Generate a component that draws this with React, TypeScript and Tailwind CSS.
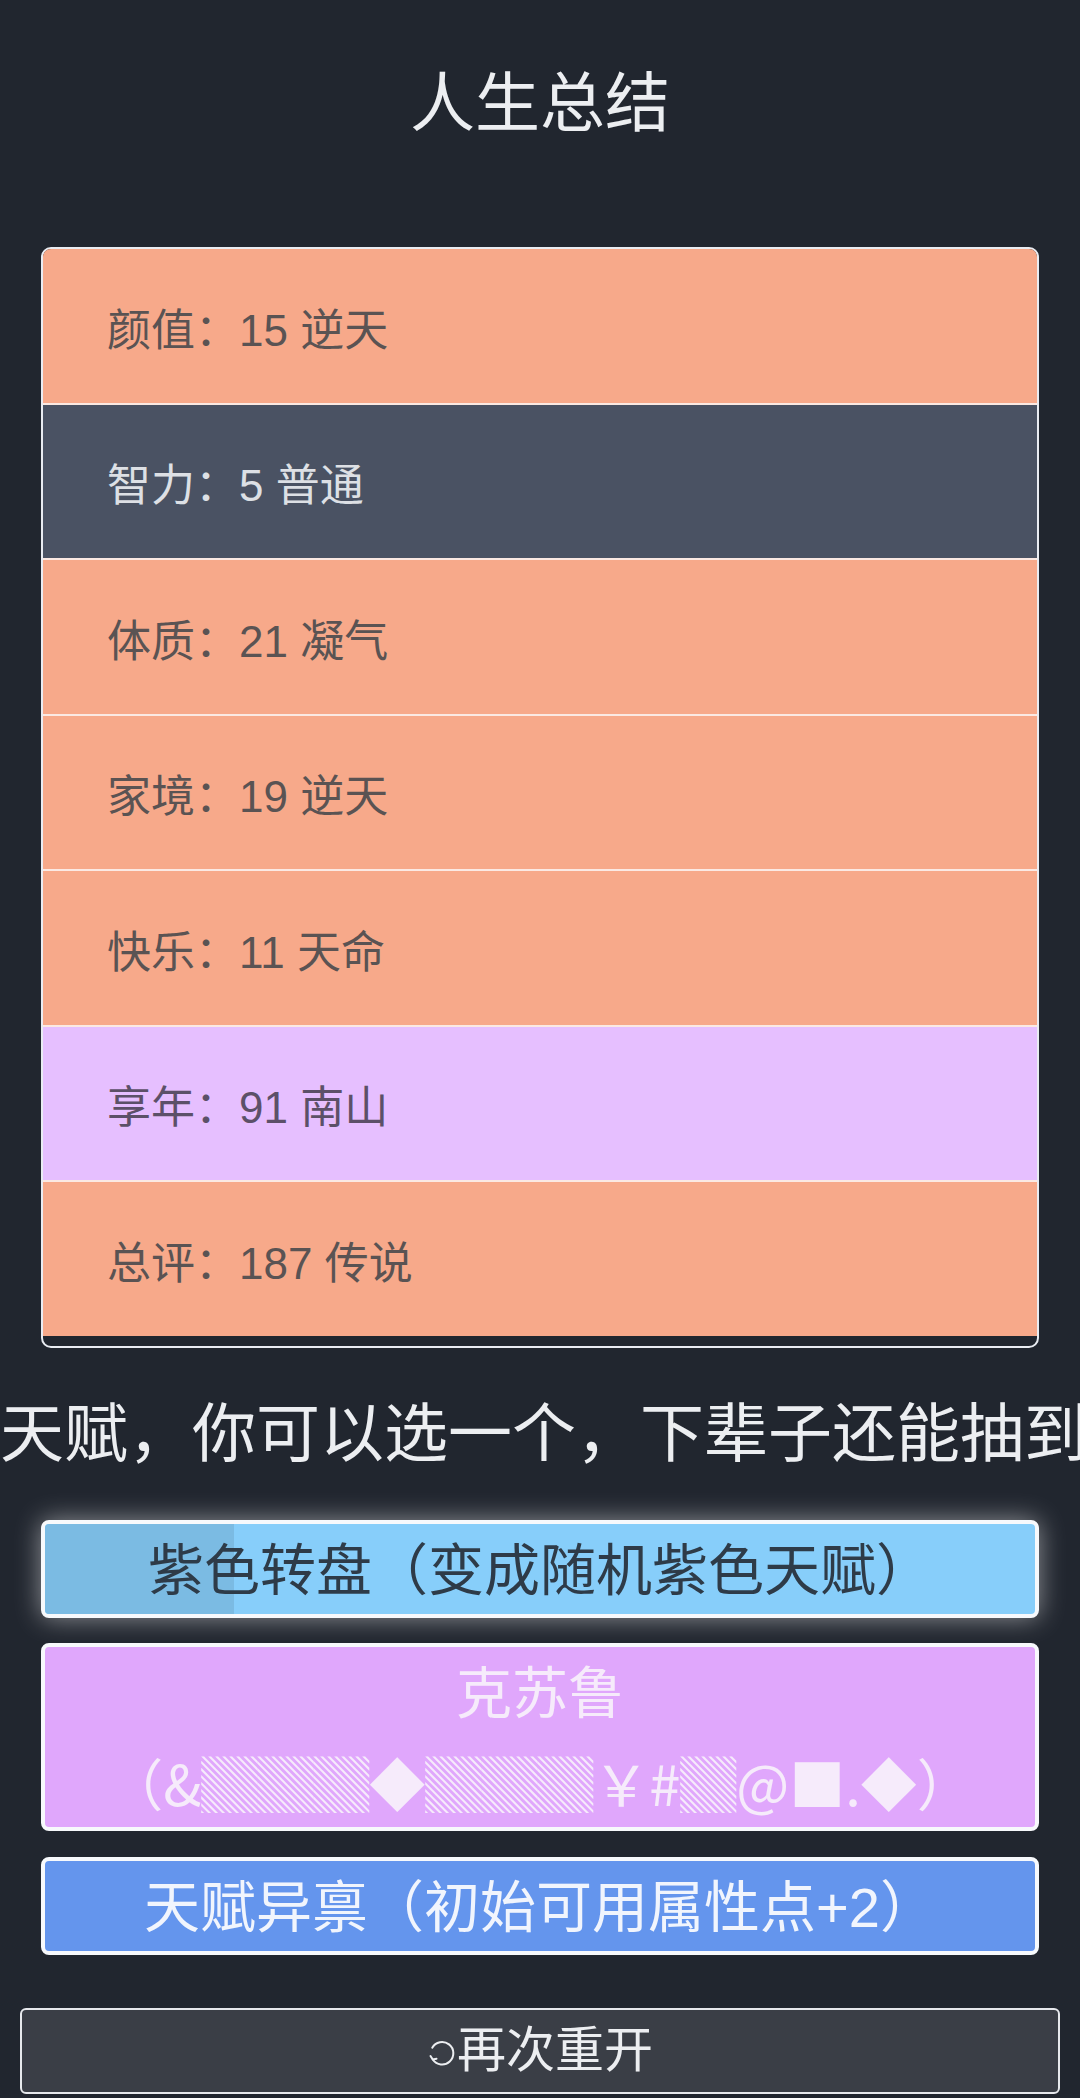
import React from "react";

const rows: { label: string; bg: string; fg: string }[] = [
  { label: "颜值：15 逆天", bg: "bg-[#f7a98a]", fg: "text-[#5a5353]" },
  { label: "智力：5 普通", bg: "bg-[#4a5263]", fg: "text-[#dde0e5]" },
  { label: "体质：21 凝气", bg: "bg-[#f7a98a]", fg: "text-[#5a5353]" },
  { label: "家境：19 逆天", bg: "bg-[#f7a98a]", fg: "text-[#5a5353]" },
  { label: "快乐：11 天命", bg: "bg-[#f7a98a]", fg: "text-[#5a5353]" },
  { label: "享年：91 南山", bg: "bg-[#e6bfff]", fg: "text-[#5c5068]" },
  { label: "总评：187 传说", bg: "bg-[#f7a98a]", fg: "text-[#5a5353]" },
];

export default function App() {
  return (
    <div className="h-[2098px] w-[1080px] overflow-hidden bg-[#21262f] pt-[56px] font-['Liberation_Sans','Noto_Sans_CJK_SC',sans-serif]">
      <h1 className="h-[96px] text-center text-[65px] font-normal leading-[96px] text-[#eceef1]">
        人生总结
      </h1>

      <div className="mx-[41px] mt-[95px] overflow-hidden rounded-[10px] border-2 border-[#e9ecf2] pb-[10px]">
        {rows.map((r, i) => (
          <div
            key={i}
            className={`flex h-[153.5px] items-center pl-[64px] text-[44px] ${r.bg} ${r.fg} ${
              i > 0 ? "box-content border-t-2 border-[#fbe9e3]" : ""
            }`}
          >
            <span className="pt-[10px]">{r.label}</span>
          </div>
        ))}
      </div>

      <div className="mt-[38px] h-[96px] whitespace-nowrap text-center text-[64px] leading-[96px] text-[#eceef1]">
        天赋，你可以选一个，下辈子还能抽到它
      </div>

      <div className="mx-[41px] mt-[38px] flex flex-col">
        <div className="relative h-[98px] overflow-hidden rounded-[8px] border-4 border-[#f7f9fc] bg-[#87cefa] pt-[3px] text-center text-[56px] leading-[87px] text-[#2e3b48] shadow-[0_0_26px_rgba(255,255,255,0.5)]">
          <div className="absolute left-0 top-0 h-full w-[189px] bg-[#7bbbe3]" />
          <span className="relative">紫色转盘（变成随机紫色天赋）</span>
        </div>

        <div className="mt-[25px] h-[188px] rounded-[8px] border-4 border-[#f7f9fc] bg-[#e0a7fc] pt-[3px] text-center text-[56px] leading-[88px] text-[#f6ebfb]">
          <div>克苏鲁</div>
          <div className="font-['Noto_Sans_CJK_SC',sans-serif]">（&amp;▓▓▓◆▓▓▓￥#▓@■.◆）</div>
        </div>

        <div className="mt-[26px] h-[98px] rounded-[8px] border-4 border-[#f7f9fc] bg-[#6495ed] pt-[3px] text-center text-[56px] leading-[87px] text-[#f1f5fd]">
          天赋异禀（初始可用属性点+2）
        </div>
      </div>

      <div className="mx-[20px] mt-[53px] flex h-[86px] items-center justify-center rounded-[6px] border-2 border-[#e6e8ec] bg-[#3a3e46] text-[49px] text-[#eceef1]">
        <svg width="30" height="30" viewBox="0 0 24 24" fill="none" stroke="#eceef1" strokeWidth="1.6" strokeLinecap="round" strokeLinejoin="round" className="mt-[5px]">
          <path d="M4.2 7.8 A9 9 0 1 1 4.6 17.2" />
          <polyline points="2.8,14.4 4.6,17.2 7.6,16.6" />
        </svg>
        <span>再次重开</span>
      </div>
    </div>
  );
}
